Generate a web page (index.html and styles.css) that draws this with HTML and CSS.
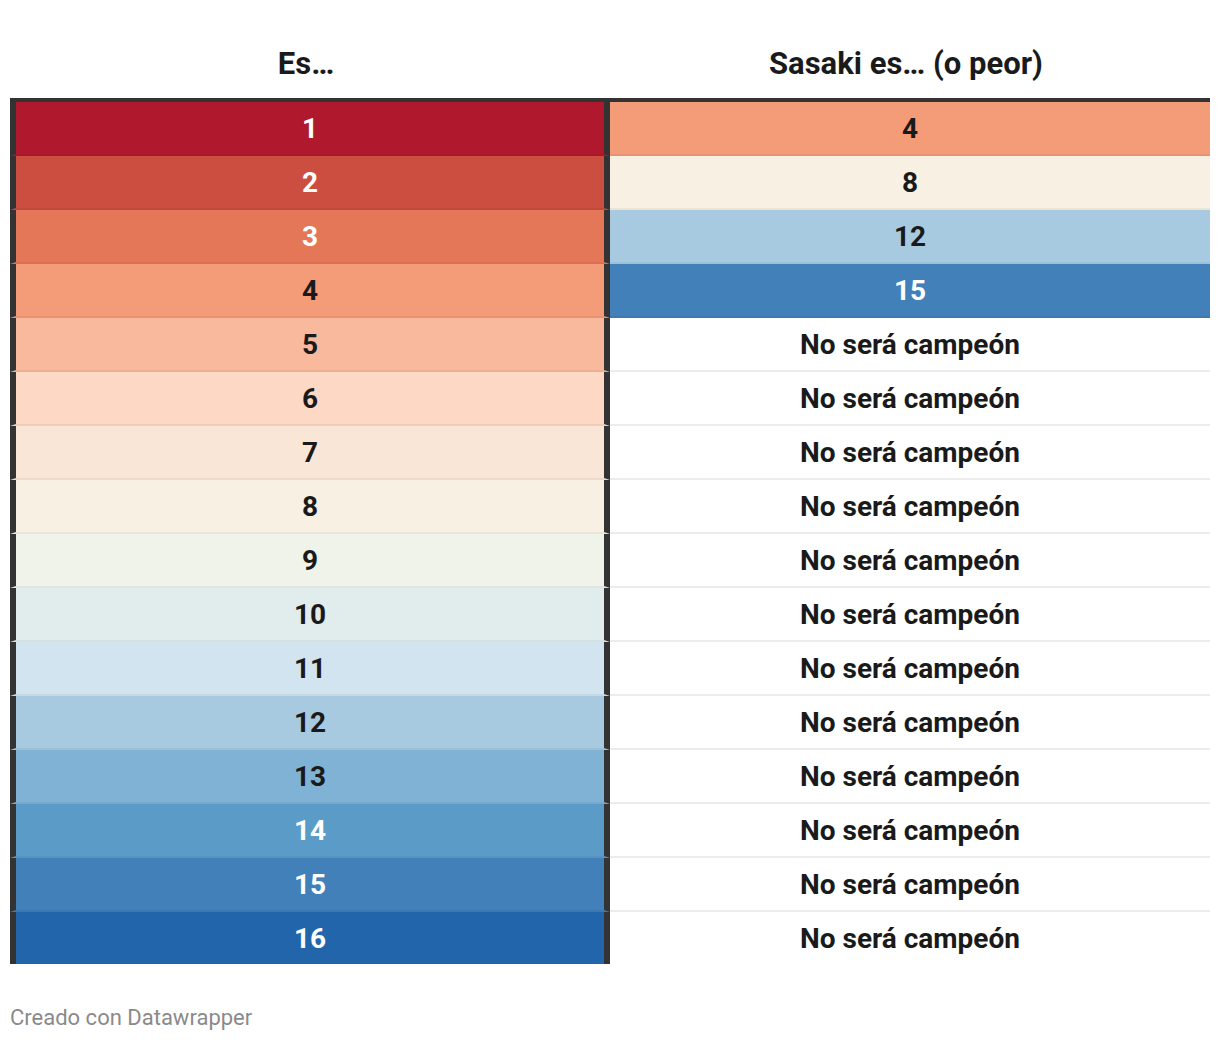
FILE: index.html
```html
<!DOCTYPE html>
<html lang="es">
<head>
<meta charset="utf-8">
<title>Sasaki</title>
<link rel="stylesheet" href="styles.css">
</head>
<body>
<div class="chart">
  <table class="tbl">
    <thead>
      <tr>
        <th class="col-a">Es…</th>
        <th class="col-b">Sasaki es… (o peor)</th>
      </tr>
    </thead>
    <tbody>
      <tr><td class="col-a c1 light">1</td><td class="col-b c4">4</td></tr>
      <tr><td class="col-a c2 light">2</td><td class="col-b c8">8</td></tr>
      <tr><td class="col-a c3 light">3</td><td class="col-b c12">12</td></tr>
      <tr><td class="col-a c4">4</td><td class="col-b c15 light">15</td></tr>
      <tr><td class="col-a c5">5</td><td class="col-b blank">No será campeón</td></tr>
      <tr><td class="col-a c6">6</td><td class="col-b blank">No será campeón</td></tr>
      <tr><td class="col-a c7">7</td><td class="col-b blank">No será campeón</td></tr>
      <tr><td class="col-a c8">8</td><td class="col-b blank">No será campeón</td></tr>
      <tr><td class="col-a c9">9</td><td class="col-b blank">No será campeón</td></tr>
      <tr><td class="col-a c10">10</td><td class="col-b blank">No será campeón</td></tr>
      <tr><td class="col-a c11">11</td><td class="col-b blank">No será campeón</td></tr>
      <tr><td class="col-a c12">12</td><td class="col-b blank">No será campeón</td></tr>
      <tr><td class="col-a c13">13</td><td class="col-b blank">No será campeón</td></tr>
      <tr><td class="col-a c14 light">14</td><td class="col-b blank">No será campeón</td></tr>
      <tr><td class="col-a c15 light">15</td><td class="col-b blank">No será campeón</td></tr>
      <tr><td class="col-a c16 light">16</td><td class="col-b blank">No será campeón</td></tr>
    </tbody>
  </table>
  <div class="footer">Creado con Datawrapper</div>
</div>
</body>
</html>
```

FILE: styles.css
```css
html, body {
  margin: 0;
  padding: 0;
  background: #ffffff;
}

body {
  font-family: Roboto, "Liberation Sans", sans-serif;
  color: #1a1a1a;
}

.chart {
  padding: 44px 10px 0 10px;
}

.tbl {
  width: 1200px;
  border-collapse: separate;
  border-spacing: 0;
  table-layout: fixed;
}

.tbl th {
  font-size: 31px;
  font-weight: 700;
  line-height: 38px;
  padding: 1px 8px 15px 0;
  text-align: center;
  border-bottom: 4px solid #333333;
  color: #1a1a1a;
}

.tbl th.col-a {
  width: 592px;
}

.tbl td {
  height: 52px;
  padding: 0;
  text-align: center;
  vertical-align: middle;
  font-size: 28px;
  font-weight: 700;
  color: #1a1a1a;
  border-bottom: 2px solid rgba(0, 0, 0, 0.05);
}

.tbl tbody tr:last-child td {
  border-bottom: none;
}

.tbl td.col-a {
  border-left: 6px solid #333333;
  border-right: 6px solid #333333;
}

.tbl td.blank {
  background: #ffffff;
  border-bottom-color: #ececec;
}

.tbl td.light {
  color: #ffffff;
}

.c1  { background: #b0192d; }
.c2  { background: #cb4e40; }
.c3  { background: #e47758; }
.c4  { background: #f49b78; }
.c5  { background: #f9b99c; }
.c6  { background: #fdd9c5; }
.c7  { background: #fae6d6; }
.c8  { background: #f8f1e3; }
.c9  { background: #eff3ea; }
.c10 { background: #e1ecec; }
.c11 { background: #d1e4ef; }
.c12 { background: #a8cae0; }
.c13 { background: #7fb2d5; }
.c14 { background: #5b9bc8; }
.c15 { background: #4180b9; }
.c16 { background: #2265ab; }

.footer {
  margin-top: 40px;
  font-size: 22px;
  line-height: 28px;
  color: #8a8a8a;
}
```
